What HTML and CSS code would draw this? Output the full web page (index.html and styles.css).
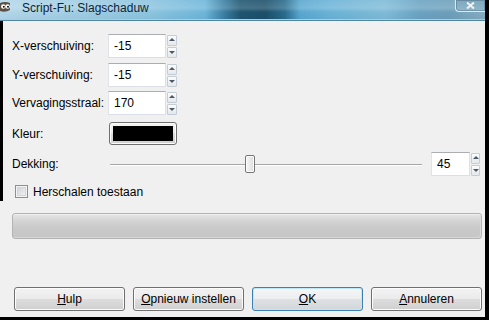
FILE: index.html
```html
<!DOCTYPE html>
<html lang="nl">
<head>
<meta charset="utf-8">
<title>Script-Fu: Slagschaduw</title>
<link rel="stylesheet" href="styles.css">
</head>
<body>
<div class="window">
  <div class="titlebar">
    <svg class="app-icon" width="11" height="12" viewBox="0 0 11 12">
      <path d="M0 2 Q5 0 10 2 L10 9 Q5 12 0 10 Z" fill="#5b5043"/>
      <circle cx="3.3" cy="5.5" r="2.3" fill="#fff"/>
      <circle cx="7.6" cy="5.5" r="2.3" fill="#fff"/>
      <circle cx="3.8" cy="5.8" r="1" fill="#111"/>
      <circle cx="8" cy="5.8" r="1" fill="#111"/>
    </svg>
    <span class="title">Script-Fu: Slagschaduw</span>
    <div class="close">
      <svg width="9" height="7" viewBox="0 0 9 7"><path d="M1 0.5 L8 6.5 M8 0.5 L1 6.5" stroke="#eef3f6" stroke-width="2"/></svg>
    </div>
  </div>

  <div class="content">
    <div class="row r1">
      <span class="lbl">X-verschuiving:</span>
      <div class="spin">
        <div class="entry">-15</div>
        <div class="arrows"><span class="arr up"></span><span class="arr down"></span></div>
      </div>
    </div>
    <div class="row r2">
      <span class="lbl">Y-verschuiving:</span>
      <div class="spin">
        <div class="entry">-15</div>
        <div class="arrows"><span class="arr up"></span><span class="arr down"></span></div>
      </div>
    </div>
    <div class="row r3">
      <span class="lbl">Vervagingsstraal:</span>
      <div class="spin">
        <div class="entry">170</div>
        <div class="arrows"><span class="arr up"></span><span class="arr down"></span></div>
      </div>
    </div>
    <div class="row r4">
      <span class="lbl">Kleur:</span>
      <div class="colorbtn"><div class="swatch"></div></div>
    </div>
    <div class="row r5">
      <span class="lbl">Dekking:</span>
      <div class="slider">
        <div class="track"></div>
        <div class="thumb" style="left: calc(45% - 5px);"></div>
      </div>
      <div class="spin small">
        <div class="entry">45</div>
        <div class="arrows"><span class="arr up"></span><span class="arr down"></span></div>
      </div>
    </div>
    <div class="row r6">
      <span class="check"></span>
      <span class="check-label">Herschalen toestaan</span>
    </div>
    <div class="progress"></div>
    <div class="buttons">
      <button class="btn"><u>H</u>ulp</button>
      <button class="btn"><u>O</u>pnieuw instellen</button>
      <button class="btn default"><u>O</u>K</button>
      <button class="btn"><u>A</u>nnuleren</button>
    </div>
  </div>
</div>
</body>
</html>
```

FILE: styles.css
```css
* { box-sizing: border-box; }

html, body {
  margin: 0;
  padding: 0;
  background: #000;
}

body {
  font-family: "Liberation Sans", Arial, sans-serif;
  font-size: 12px;
  color: #000;
}

.window {
  position: relative;
  width: 489px;
  height: 320px;
  display: flex;
  flex-direction: column;
  background: #f0f0f0;
  border-right: 4px solid #000;
  border-bottom: 3px solid #000;
}

.window::before {
  content: "";
  position: absolute;
  left: 0;
  top: 21px;
  width: 3px;
  height: 180px;
  background: #000;
}

/* ---------- title bar ---------- */
.titlebar {
  height: 21px;
  flex: none;
  display: flex;
  align-items: flex-start;
  background:
    linear-gradient(to bottom, rgba(255,255,255,0.10) 0, rgba(255,255,255,0.18) 40%, rgba(0,0,0,0) 60%, rgba(0,0,0,0.04) 100%),
    linear-gradient(to right,
      #b3d7ea 0,
      #a4cfe5 60px,
      #8cc4df 150px,
      #6db6da 205px,
      #3a7fa3 224px,
      #1f5672 240px,
      #1c4f69 265px,
      #2a6c8d 285px,
      #58a7cf 300px,
      #6ab3d7 330px,
      #7fbbd8 385px,
      #6aa3c2 420px,
      #6d9fba 450px,
      #86acc1 485px);
  border-bottom: 1px solid #4f86a4;
  box-shadow: inset 0 -1px 0 #a9cde0;
}

.app-icon {
  flex: none;
  margin-top: 1px;
}

.title {
  margin-left: 11px;
  line-height: 16px;
  color: #0f2533;
  white-space: nowrap;
}

.close {
  margin-left: auto;
  width: 30px;
  height: 12px;
  display: flex;
  justify-content: center;
  align-items: flex-start;
  padding-top: 2px;
  border: 1px solid #dfe9ef;
  border-top: none;
  border-right: none;
  border-bottom-left-radius: 4px;
  background: linear-gradient(to bottom, #7da8bf, #90b6ca);
  box-shadow: inset 0 0 0 1px rgba(60,90,110,0.35);
}

/* ---------- content ---------- */
.content {
  flex: 1;
  display: flex;
  flex-direction: column;
  padding: 13px 3px 6px 12px;
}

.row {
  display: flex;
  align-items: center;
}

.r1 { height: 24px; }
.r2 { height: 24px; margin-top: 5px; }
.r3 { height: 24px; margin-top: 4px; }
.r4 { height: 23px; margin-top: 7px; }
.r5 { height: 24px; margin-top: 7px; }
.r6 { height: 13px; margin-top: 9px; }

.lbl {
  width: 96px;
  flex: none;
  white-space: nowrap;
}

/* spin button */
.spin {
  display: flex;
  align-items: center;
  height: 24px;
}

.entry {
  width: 58px;
  height: 24px;
  padding-left: 5px;
  line-height: 22px;
  background: #fff;
  border: 1px solid #dbdfe6;
  border-top-color: #abadb3;
  border-left-color: #e2e3ea;
}

.spin.small { margin-right: 2px; margin-left: 9px; }
.spin.small .entry { width: 39px; }

.arrows {
  display: flex;
  flex-direction: column;
  gap: 1px;
  margin-left: 1px;
}

.arr {
  position: relative;
  display: block;
  width: 10px;
  height: 11px;
  border: 1px solid #c5cdd6;
  border-radius: 1px;
  background: linear-gradient(to bottom, #fbfcfd, #e4e8ec);
}

.spin.small .arr { width: 9px; }

.arr::after {
  content: "";
  position: absolute;
  left: 50%;
  top: 50%;
  margin-left: -3px;
  width: 0;
  height: 0;
  border-left: 3px solid transparent;
  border-right: 3px solid transparent;
}

.arr.up::after {
  margin-top: -2px;
  border-bottom: 3px solid #4b5966;
}

.arr.down::after {
  margin-top: -1px;
  border-top: 3px solid #4b5966;
}

/* colour button */
.colorbtn {
  margin-left: 1px;
  width: 68px;
  height: 23px;
  padding: 3px;
  border: 1px solid #707070;
  border-radius: 3px;
  background: linear-gradient(to bottom, #f2f2f2 0, #ebebeb 50%, #dddddd 50%, #cfcfcf 100%);
  box-shadow: inset 0 0 0 1px #fcfcfc;
}

.swatch {
  width: 100%;
  height: 100%;
  background: #000;
}

/* slider */
.slider {
  position: relative;
  flex: 1;
  height: 20px;
  margin-left: 2px;
}

.track {
  position: absolute;
  left: 0;
  right: 0;
  top: 10px;
  height: 2px;
  border-top: 1px solid #a6a6a6;
  border-bottom: 1px solid #ffffff;
}

.thumb {
  position: absolute;
  top: 1px;
  width: 10px;
  height: 18px;
  border: 1px solid #757575;
  border-radius: 2px;
  background: linear-gradient(to right, #f7f7f7, #dcdcdc);
  box-shadow: inset 0 0 0 1px #fdfdfd;
}

/* check */
.check {
  width: 13px;
  height: 13px;
  margin-left: 3px;
  border: 1px solid #8e8f8f;
  background: linear-gradient(135deg, #cbcfd5, #f6f6f6);
  box-shadow: inset 0 0 0 1px #f4f4f4, inset 0 0 0 2px #d3d5d8;
}

.check-label {
  margin-left: 5px;
}

/* progress */
.progress {
  margin-top: 15px;
  height: 26px;
  border: 1px solid #b3b3b3;
  border-radius: 3px;
  background: linear-gradient(to bottom, #e6e6e6 0, #d6d6d6 25%, #cacaca 55%, #c6c6c6 100%);
  box-shadow: inset 0 1px 0 #efefef, inset -1px -1px 0 #d8d8d8;
}

/* buttons */
.buttons {
  margin-top: auto;
  margin-left: 2px;
  margin-right: 0;
  display: grid;
  grid-template-columns: repeat(4, 1fr);
  gap: 8px;
}

.btn {
  height: 24px;
  padding: 0;
  font-family: inherit;
  font-size: 12px;
  color: #000;
  border: 1px solid #707070;
  border-radius: 3px;
  background: linear-gradient(to bottom, #f2f2f2 0, #ebebeb 50%, #dddddd 50%, #cfcfcf 100%);
  box-shadow: inset 0 0 0 1px #fcfcfc;
}

.btn.default {
  border-color: #3c7fb1;
  box-shadow: inset 0 0 0 1px #bfe6fa;
  background: linear-gradient(to bottom, #f4f6f7 0, #eceef0 50%, #dfe2e4 50%, #d2d6d9 100%);
}
```
